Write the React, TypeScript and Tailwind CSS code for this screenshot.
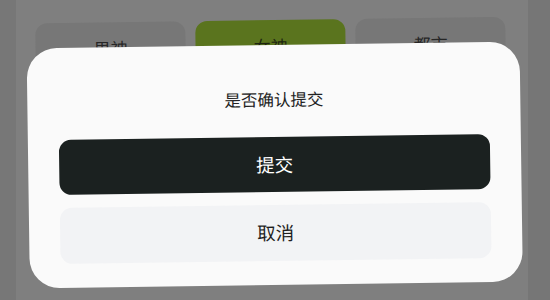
const tabs = [
  { label: "男神", active: false },
  { label: "女神", active: true },
  { label: "都市", active: false },
];

export default function App() {
  return (
    <div
      className="relative h-[300px] w-[550px] overflow-hidden bg-[#7d7d7d]"
      style={{ fontFamily: '"Noto Sans CJK SC", "Noto Sans", sans-serif' }}
    >
      <div className="flex h-full">
        <div className="h-full w-[16px] bg-[#777777]" />
        <div className="h-full flex-1 bg-[#7f7f7f]" />
        <div className="h-full w-[22px] bg-[#767676]" />
      </div>

      <div className="absolute inset-0 rotate-[-0.8deg]">
        {/* tabs behind the dialog */}
        <div className="flex gap-[10px] pl-[37px] pr-[40px] pt-[20px]">
          {tabs.map((t) => (
            <div
              key={t.label}
              className={
                t.active
                  ? "flex h-[54px] w-[150px] justify-center rounded-[12px] bg-[#5a741e] pt-[13px] text-[17px] text-[#1d2410]"
                  : "flex h-[54px] w-[150px] justify-center rounded-[12px] bg-[#777777] pt-[13px] text-[17px] text-[#262626]"
              }
            >
              {t.label}
            </div>
          ))}
        </div>

        {/* confirm dialog */}
        <div className="absolute left-[28px] top-[45px] flex h-[240px] w-[493px] flex-col items-center rounded-[30px] bg-[#fafafa] px-[31px] pb-[24px] pt-[42px]">
          <div className="text-[16.5px] leading-[24px] text-[#222222]">是否确认提交</div>
          <div className="mt-[26px] flex h-[55px] w-full items-center justify-center rounded-[12px] bg-[#1b2120] text-[18.5px] text-white">
            提交
          </div>
          <div className="mt-[13px] flex h-[56px] w-full items-center justify-center rounded-[12px] bg-[#f2f3f5] text-[18.5px] text-[#1f1f1f]">
            取消
          </div>
        </div>
      </div>
    </div>
  );
}
